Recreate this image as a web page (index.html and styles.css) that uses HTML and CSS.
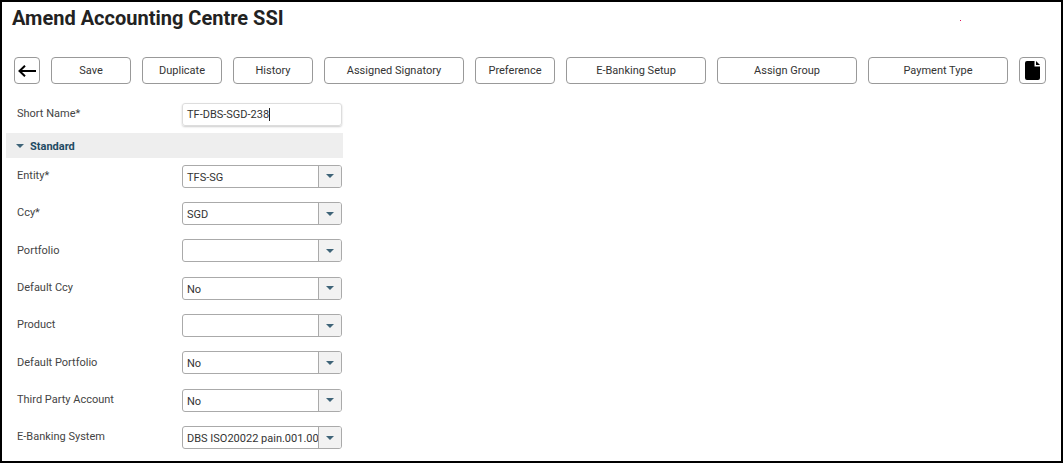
FILE: index.html
```html
<!DOCTYPE html>
<html lang="en">
<head>
<meta charset="utf-8">
<title>Amend Accounting Centre SSI</title>
<link rel="stylesheet" href="styles.css">
</head>
<body>
<main class="frame">
  <h1 class="title">Amend Accounting Centre SSI</h1>
  <span class="speck"></span>
  <div class="toolbar">
    <button class="btn btn-back" aria-label="Back"><svg width="18" height="12" viewBox="0 0 18 12"><path d="M18 6H1.5M7 .7L1.5 6 7 11.3" fill="none" stroke="#000" stroke-width="2"/></svg></button>
    <button class="btn btn-sm">Save</button>
    <button class="btn btn-sm">Duplicate</button>
    <button class="btn btn-sm">History</button>
    <button class="btn btn-lg">Assigned Signatory</button>
    <button class="btn btn-sm">Preference</button>
    <button class="btn btn-lg">E-Banking Setup</button>
    <button class="btn btn-lg">Assign Group</button>
    <button class="btn btn-lg">Payment Type</button>
    <button class="btn btn-icon" aria-label="New document"><svg width="15" height="19" viewBox="0 0 15 19"><path d="M2 0h7.5v5.5H15V17a2 2 0 0 1-2 2H2a2 2 0 0 1-2-2V2a2 2 0 0 1 2-2zM11 0l4 4h-4z" fill="#000"/></svg></button>
  </div>
  <div class="short-row">
    <label class="label">Short Name*</label>
    <div class="text-input">TF-DBS-SGD-238<span class="caret"></span></div>
  </div>
  <div class="section"><span class="tri"></span><span class="section-name">Standard</span></div>
  <div class="rows">
    <div class="row"><label class="label">Entity*</label><div class="select"><span class="value">TFS-SG</span><span class="arrow"><span class="tri"></span></span></div></div>
    <div class="row"><label class="label">Ccy*</label><div class="select"><span class="value">SGD</span><span class="arrow"><span class="tri"></span></span></div></div>
    <div class="row"><label class="label">Portfolio</label><div class="select"><span class="value"></span><span class="arrow"><span class="tri"></span></span></div></div>
    <div class="row"><label class="label">Default Ccy</label><div class="select"><span class="value">No</span><span class="arrow"><span class="tri"></span></span></div></div>
    <div class="row"><label class="label">Product</label><div class="select"><span class="value"></span><span class="arrow"><span class="tri"></span></span></div></div>
    <div class="row"><label class="label">Default Portfolio</label><div class="select"><span class="value">No</span><span class="arrow"><span class="tri"></span></span></div></div>
    <div class="row"><label class="label">Third Party Account</label><div class="select"><span class="value">No</span><span class="arrow"><span class="tri"></span></span></div></div>
    <div class="row"><label class="label">E-Banking System</label><div class="select"><span class="value">DBS ISO20022 pain.001.00</span><span class="arrow"><span class="tri"></span></span></div></div>
  </div>
</main>
</body>
</html>
```
FILE: styles.css
```css
* { box-sizing: border-box; }
html, body { margin: 0; height: 100%; background: #fff; overflow: hidden; }
body { font-family: Roboto, "Liberation Sans", sans-serif; font-size: 11px; color: #333; }
.frame {
  position: relative;
  width: 1063px;
  height: 463px;
  border: 2px solid #000;
  padding: 0 0 0 4px;
  overflow: hidden;
}
.title {
  margin: 0 0 0 6px;
  height: 55px;
  padding-top: 3px;
  font-size: 20px;
  line-height: 26px;
  font-weight: 700;
  color: #222;
}
.speck { position: absolute; left: 958px; top: 18px; width: 1px; height: 1px; background: #e0105a; }
.toolbar { display: flex; gap: 11px; margin-left: 8px; height: 27px; }
.btn {
  height: 27px;
  padding: 0;
  display: flex;
  align-items: center;
  justify-content: center;
  background: #fff;
  border: 1px solid #999;
  border-radius: 4px;
  font: 400 11px Roboto, "Liberation Sans", sans-serif;
  color: #333;
}
.btn-back { width: 26px; }
.btn-icon { width: 27px; }
.btn-sm { width: 80px; }
.btn-lg { width: 140px; }
.short-row { display: flex; align-items: flex-start; margin-top: 19px; height: 23px; }
.label { display: block; width: 176px; padding-left: 11px; line-height: 22px; color: #444; }
.text-input {
  width: 160px;
  height: 23px;
  padding-left: 4px;
  line-height: 22px;
  font-size: 11px;
  border: 1px solid #ddd;
  border-radius: 3px;
  box-shadow: 0 1px 2px rgba(0,0,0,.2);
  color: #333;
  white-space: nowrap;
}
.caret { display: inline-block; width: 1px; height: 13px; background: #222; vertical-align: -3px; }
.section {
  display: flex;
  align-items: center;
  width: 337px;
  height: 25px;
  margin-top: 7px;
  padding-left: 10px;
  gap: 6px;
  background: #eee;
  font-weight: 700;
  color: #1f4a63;
}
.section-name { padding-top: 2px; }
.tri { display: block; width: 0; height: 0; border-left: 4px solid transparent; border-right: 4px solid transparent; border-top: 4px solid #3f6478; }
.rows { margin-top: 6.8px; }
.row { display: flex; align-items: flex-start; height: 37.33px; }
.row .label { line-height: 21px; padding-top: .35px; }
.select {
  display: flex;
  width: 160px;
  height: 23px;
  border: 1px solid #aaa;
  border-radius: 3px;
  overflow: hidden;
}
.value { flex: 1; min-width: 0; padding-left: 4px; line-height: 23px; white-space: nowrap; overflow: hidden; color: #333; }
.arrow { flex: none; width: 23px; display: flex; align-items: center; justify-content: center; background: #f2f2f2; border-left: 1px solid #aaa; }
```
